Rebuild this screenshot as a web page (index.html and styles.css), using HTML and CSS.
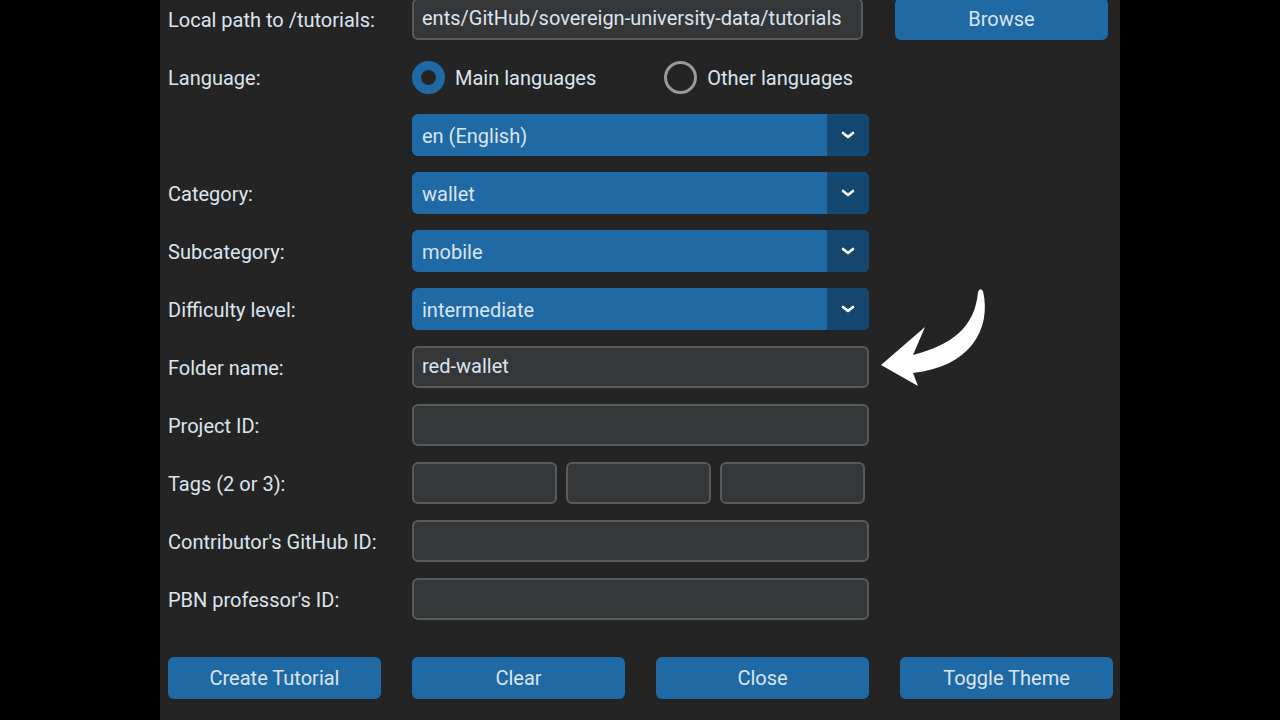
FILE: index.html
```html
<!DOCTYPE html>
<html>
<head>
<meta charset="utf-8">
<link rel="stylesheet" href="styles.css">
</head>
<body>
<div class="panel">
  <div class="form">
    <div class="label">Local path to /tutorials:</div>
    <div class="field entry path">ents/GitHub/sovereign-university-data/tutorials</div>
    <button class="btn browse">Browse</button>

    <div class="label">Language:</div>
    <div class="radios">
      <div class="radio on"><span class="dot"></span><span>Main languages</span></div>
      <div class="radio"><span class="dot"></span><span>Other languages</span></div>
    </div>
    <div></div>

    <div class="label"></div>
    <div class="field combo"><span class="val">en (English)</span><span class="arrow"><svg width="14" height="8" viewBox="0 0 14 8"><path d="M2 2 L7 6 L12 2" fill="none" stroke="#fff" stroke-width="2.6" stroke-linecap="round" stroke-linejoin="round"/></svg></span></div>
    <div></div>

    <div class="label">Category:</div>
    <div class="field combo"><span class="val">wallet</span><span class="arrow"><svg width="14" height="8" viewBox="0 0 14 8"><path d="M2 2 L7 6 L12 2" fill="none" stroke="#fff" stroke-width="2.6" stroke-linecap="round" stroke-linejoin="round"/></svg></span></div>
    <div></div>

    <div class="label">Subcategory:</div>
    <div class="field combo"><span class="val">mobile</span><span class="arrow"><svg width="14" height="8" viewBox="0 0 14 8"><path d="M2 2 L7 6 L12 2" fill="none" stroke="#fff" stroke-width="2.6" stroke-linecap="round" stroke-linejoin="round"/></svg></span></div>
    <div></div>

    <div class="label">Difficulty level:</div>
    <div class="field combo"><span class="val">intermediate</span><span class="arrow"><svg width="14" height="8" viewBox="0 0 14 8"><path d="M2 2 L7 6 L12 2" fill="none" stroke="#fff" stroke-width="2.6" stroke-linecap="round" stroke-linejoin="round"/></svg></span></div>
    <div class="arrow-cell">
      <svg class="pointer" width="130" height="110" viewBox="0 0 130 110">
        <path d="M113 6 C122 45, 99 82, 43 88 L48 101 L11 80 L55 42 L43 70 C82 60, 105 42, 108 7 Q110 2 113 6 Z" fill="#fff"/>
      </svg>
    </div>

    <div class="label">Folder name:</div>
    <div class="field entry">red-wallet</div>
    <div></div>

    <div class="label">Project ID:</div>
    <div class="field entry"></div>
    <div></div>

    <div class="label">Tags (2 or 3):</div>
    <div class="tags">
      <div class="field entry"></div>
      <div class="field entry"></div>
      <div class="field entry"></div>
    </div>
    <div></div>

    <div class="label">Contributor's GitHub ID:</div>
    <div class="field entry"></div>
    <div></div>

    <div class="label">PBN professor's ID:</div>
    <div class="field entry"></div>
    <div></div>
  </div>

  <div class="buttons">
    <button class="btn">Create Tutorial</button>
    <button class="btn">Clear</button>
    <button class="btn">Close</button>
    <button class="btn">Toggle Theme</button>
  </div>
</div>
</body>
</html>
```

FILE: styles.css
```css
html, body {
  margin: 0;
  padding: 0;
  background: #000;
  height: 720px;
  overflow: hidden;
}
body {
  font-family: Roboto, "Noto Sans", sans-serif;
  font-size: 20px;
  color: #dce4ee;
}
.panel {
  margin-left: 160px;
  width: 960px;
  height: 720px;
  background: #242424;
  box-sizing: border-box;
  padding: 0 0 0 8px;
}
.form {
  display: grid;
  grid-template-columns: 244px 457px 239px;
  grid-auto-rows: 42px;
  row-gap: 16px;
  position: relative;
  top: -2px;
}
.label {
  display: flex;
  align-items: center;
  white-space: nowrap;
  padding-top: 1px;
}
.field {
  box-sizing: border-box;
  height: 42px;
  border-radius: 6px;
  display: flex;
  align-items: center;
}
.entry {
  background: #343638;
  border: 2px solid #565b5e;
  padding-left: 8px;
  padding-bottom: 2px;
  white-space: nowrap;
  overflow: hidden;
}
.path {
  width: 451px;
}
.combo {
  background: #1f6aa5;
  overflow: hidden;
}
.combo .val {
  flex: 1;
  padding-left: 10px;
  padding-top: 1px;
}
.combo .arrow {
  width: 42px;
  height: 42px;
  background: #144870;
  display: flex;
  align-items: center;
  justify-content: center;
}
.btn {
  font-family: Roboto, "Noto Sans", sans-serif;
  font-size: 20px;
  color: #dce4ee;
  background: #1f6aa5;
  border: none;
  border-radius: 6px;
  width: 213px;
  height: 42px;
  padding: 0;
}
.browse {
  margin-left: 26px;
}
.radios {
  display: flex;
  align-items: center;
  padding-top: 1px;
}
.radio {
  display: flex;
  align-items: center;
  gap: 10px;
}
.radio + .radio {
  margin-left: 68px;
}
.radio .dot {
  width: 33px;
  height: 33px;
  box-sizing: border-box;
  border-radius: 50%;
  border: 3px solid #949a9f;
}
.radio.on .dot {
  border: 9px solid #1f6aa5;
}
.tags {
  display: flex;
  gap: 9px;
}
.tags .entry {
  width: 145px;
}
.arrow-cell {
  position: relative;
}
.pointer {
  position: absolute;
  left: 1px;
  top: -3px;
}
.buttons {
  display: flex;
  gap: 31px;
  margin-top: 35px;
}
```
